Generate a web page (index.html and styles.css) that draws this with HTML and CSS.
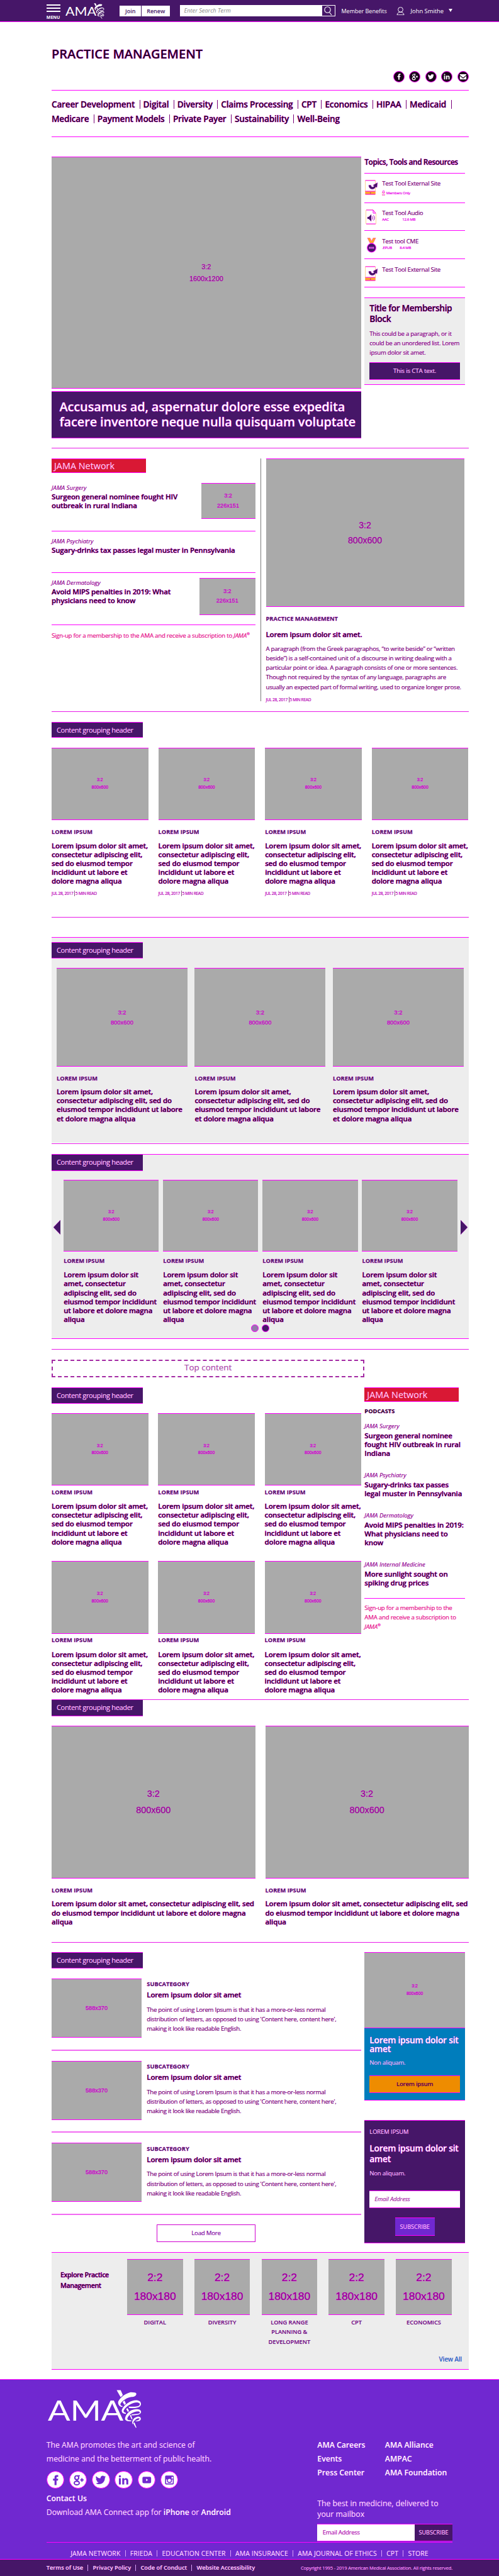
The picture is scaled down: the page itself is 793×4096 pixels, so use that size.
FILE: index.html
```html
<!DOCTYPE html>
<html lang="en">
<head>
<meta charset="utf-8">
<title>Practice Management</title>
<link rel="stylesheet" href="styles.css">
</head>
<body>
<svg width="0" height="0" class="defs">
  <defs>
    <symbol id="staff" viewBox="-2 -2 211 323">
      <g fill="#fff">
        <path d="M0 0H34L52 42 34 60z"/>
        <path d="M166 32Q166 22 150 20L118 18C80 26 30 60 14 95 8 115 18 138 48 142L50 134C34 132 28 125 34 112 50 88 90 62 125 58 145 58 166 48 166 32z"/>
        <path d="M205 120C208 80 150 75 100 105 60 130 35 165 45 185 50 198 65 200 78 200L78 192C60 188 54 180 62 168 80 130 150 95 180 105 195 110 200 118 190 130 175 142 130 140 100 140L105 150C150 155 200 152 205 120z"/>
        <path d="M206 185C206 155 150 155 115 175 80 200 65 235 73 250 80 262 105 265 125 262L123 255C100 256 88 250 90 238 100 205 150 175 185 180 198 185 200 190 190 196 170 202 145 202 130 204L120 211C160 215 204 208 206 185z"/>
        <path d="M204 240C200 215 170 220 150 235 130 252 128 275 133 290 140 265 160 240 185 238 195 238 195 244 188 248 175 256 165 256 152 262 180 264 204 262 204 240z"/>
        <path d="M50 100L66 88 78 115 66 125zM80 160L92 152 104 175 95 185zM110 212L120 208 134 245 126 245zM138 278L150 272 167 315 162 319z"/>
      </g>
    </symbol>
    <symbol id="fb" viewBox="0 0 20 20"><path d="M8.8 16.2v-5.500H7V8.400h1.800V6.800C8.800 4.900 9.900 4.200 11.500 4.200h1.700v2.200h-1.100c-.8 0-.9.4-.9 1v1h2l-.3 2.300h-1.700v5.500z"/></symbol>
    <symbol id="gp" viewBox="0 0 20 20"><g fill="none" stroke="currentColor" stroke-width="1.500"><circle cx="8.300" cy="7.300" r="2.300"/><ellipse cx="8.300" cy="13.700" rx="3" ry="2.200"/><path d="M8.500 9.600c-1.500 1 1 1.500 2 2.500M9 5h3M12.500 10h4M14.500 8v4"/></g></symbol>
    <symbol id="tw" viewBox="0 0 20 20"><path d="M16 6c-.5.3-1 .4-1.400.4.500-.3.900-.8 1-1.300-.5.300-1 .5-1.600.6a2.600 2.600 0 0 0-4.400 2.300C7.500 7.900 5.600 6.900 4.400 5.400c-.7 1.200-.3 2.700.8 3.400-.4 0-.8-.1-1.100-.3 0 1.200.8 2.300 2 2.500h-1.100c.3 1 1.300 1.700 2.400 1.800A5 5 0 0 1 4 13.900c4.900 3 11-.1 10.900-6.600.4-.3.800-.8 1.100-1.300z"/></symbol>
    <symbol id="li" viewBox="0 0 20 20"><path d="M4.500 8h2.300v7.500H4.500zM5.700 4.300a1.300 1.300 0 1 1 0 2.700 1.300 1.300 0 0 1 0-2.700zM8.500 8h2.300v1c1-1.700 4.900-1.800 4.900 1.700v4.800h-2.300v-4.200c0-2-2.500-1.800-2.500 0v4.200H8.500z"/></symbol>
    <symbol id="ml" viewBox="0 0 20 20"><path d="M3.500 5h13v1.500L10 12 3.500 6.500zM3.500 8.500L10 14l6.500-5.500V15.500h-13z"/></symbol>
    <symbol id="yt" viewBox="0 0 20 20"><path fill-rule="evenodd" d="M6.300 6.200h7.400a1.500 1.500 0 0 1 1.500 1.500v4.800a1.500 1.500 0 0 1-1.500 1.500H6.300a1.500 1.500 0 0 1-1.500-1.500V7.700a1.500 1.500 0 0 1 1.500-1.500zM9.200 8.500v3l2.400-1.500z"/></symbol>
    <symbol id="ig" viewBox="0 0 20 20"><rect x="4.800" y="4.800" width="10.400" height="10.600" rx="1.200"/><path d="M12.500 6.500h2v1.800h-2zM6 9.500h8v4.700H6z" fill="#fff"/><circle cx="10" cy="10.500" r="3"/><circle cx="10" cy="10.500" r="1.900" fill="#fff"/></symbol>
    <symbol id="ext" viewBox="0 0 22 24"><rect x="1.500" y="1" width="16" height="22" rx="1" fill="#fff" stroke="#ffa52b"/><rect x="1.500" y="18" width="16" height="5" fill="#ffa52b"/><path d="M1.500 1h16M1.500 18h16M1.500 23h16" stroke="#f0f"/><rect x="9" y="20" width="1.500" height="1.500" fill="#a02a80"/><path d="M7 8.500c0 7 8.500 8.500 11 2.500l2 1 .8-7.500-7 4 2 1c-1.500 3-5 2.500-5.300-1z" fill="#461668" stroke="#f0f" stroke-width=".6"/></symbol>
    <symbol id="aud" viewBox="0 0 22 24"><path d="M3 1h11l4 5v17H3z" fill="#fff" stroke="#ffa52b"/><path d="M3 1h11l4 5h-4V1M3 23h15" fill="none" stroke="#f0f"/><path d="M5 12h2l4-4v11l-4-4H5z" fill="#461668" stroke="#f0f" stroke-width=".4"/><path d="M12.500 11q2 2.500 0 5M14.500 9.500q3.500 4 0 8" fill="none" stroke="#a000b0"/></symbol>
    <symbol id="cme" viewBox="0 0 22 24"><path d="M5 .4h4l2.500 5 2.500-5h4l-4 8h-5z" fill="#ffa52b" stroke="#f0f" stroke-width=".7"/><circle cx="11.500" cy="16" r="6.400" fill="#461668" stroke="#f0f" stroke-width="2"/><path d="M7.500 16h8" stroke="#f6f" stroke-width="3" stroke-dasharray="1.500 .6"/></symbol>
  </defs>
</svg>

<header class="top">
  <div class="burger"><i></i><i></i><i></i><b>MENU</b></div>
  <div class="logo"><span class="word">AMA</span><svg class="logo-staff"><use href="#staff"/></svg></div>
  <div class="join"><a>Join</a><a>Renew</a></div>
  <div class="search"><em>Enter Search Term</em><svg class="mag" viewBox="0 0 20 16"><circle cx="8.500" cy="6.500" r="4.700"/><path d="M11.500 10.500l3.500 4.500"/></svg></div>
  <a class="benefits">Member Benefits</a>
  <svg class="user" viewBox="0 0 13 14"><circle cx="6.500" cy="4.500" r="4"/><path d="M.8 13.200c0-6 11.400-6 11.400 0z"/></svg>
  <a class="name">John Smithe</a><i class="caret"></i>
</header>

<main>
  <section class="title-bar">
    <h1>PRACTICE MANAGEMENT</h1>
    <div class="share">
      <svg><use href="#fb"/></svg><svg><use href="#gp"/></svg><svg><use href="#tw"/></svg><svg><use href="#li"/></svg><svg><use href="#ml"/></svg>
    </div>
  </section>

  <nav class="topics">
    <div><a>Career Development</a><a>Digital</a><a>Diversity</a><a>Claims Processing</a><a>CPT</a><a>Economics</a><a>HIPAA</a><a>Medicaid</a></div>
    <div><a>Medicare</a><a>Payment Models</a><a>Private Payer</a><a>Sustainability</a><a class="last">Well-Being</a></div>
  </nav>

  <section class="hero">
    <div>
      <div class="ph ph-hero">3:2<br>1600x1200</div>
      <h2 class="hero-cap">Accusamus ad, aspernatur dolore esse expedita<br>facere inventore neque nulla quisquam voluptate</h2>
    </div>
    <aside class="side">
      <h3 class="tools-head">Topics, Tools and Resources</h3>
      <div class="tool first"><svg><use href="#ext"/></svg><div>Test Tool External Site<p class="lock"><svg viewBox="0 0 10 16"><path d="M2.500 7V4a2.500 3 0 0 1 5 0v3" fill="none" stroke="#f0f" stroke-width="1.600"/><rect x="1" y="7" width="8" height="8" fill="#fff" stroke="#f0a030" stroke-width="1.600"/><path d="M5 9v4M0 7h10M0 15h10" stroke="#f0f" stroke-width="1.400"/></svg>Members Only</p></div></div>
      <div class="tool"><svg><use href="#aud"/></svg><div>Test Tool Audio<p><span class="c1">AAC</span>12.6 MB</p></div></div>
      <div class="tool"><svg><use href="#cme"/></svg><div>Test tool CME<p><span class="c2">.EPUB</span>8.4 MB</p></div></div>
      <div class="tool"><svg><use href="#ext"/></svg><div>Test Tool External Site</div></div>
      <div class="member">
        <h3>Title for Membership<br>Block</h3>
        <p>This could be a paragraph, or it<br>could be an unordered list. Lorem<br>ipsum dolor sit amet.</p>
        <a>This is CTA text.</a>
      </div>
    </aside>
  </section>

  <section class="network">
    <div class="net-left">
      <div class="jama">JAMA Network</div>
      <article class="n1"><div><em>JAMA Surgery</em><h4>Surgeon general nominee fought HIV<br>outbreak in rural Indiana</h4></div><div class="ph ph-a">3:2<br>226x151</div></article>
      <article class="n2"><div><em>JAMA Psychiatry</em><h4>Sugary-drinks tax passes legal muster in Pennsylvania</h4></div></article>
      <article class="n3"><div><em>JAMA Dermatology</em><h4>Avoid MIPS penalties in 2019: What<br>physicians need to know</h4></div><div class="ph ph-b">3:2<br>226x151</div></article>
      <p class="signup">Sign-up for a membership to the AMA and receive a subscription to <i>JAMA</i><sup>®</sup></p>
    </div>
    <div class="net-right">
      <div class="ph ph-net">3:2<br>800x600</div>
      <div class="kicker">PRACTICE MANAGEMENT</div>
      <h4>Lorem ipsum dolor sit amet.</h4>
      <p>A paragraph (from the Greek paragraphos, “to write beside” or “written<br>beside”) is a self-contained unit of a discourse in writing dealing with a<br>particular point or idea. A paragraph consists of one or more sentences.<br>Though not required by the syntax of any language, paragraphs are<br>usually an expected part of formal writing, used to organize longer prose.</p>
      <div class="meta">JUL 28, 2017 <s></s> 5 MIN READ</div>
    </div>
  </section>

  <section class="four">
    <h5 class="group">Content grouping header</h5>
    <div class="cards">
      <article><div class="ph">3:2<br>800x600</div><div class="kicker">LOREM IPSUM</div><h4>Lorem ipsum dolor sit amet,<br>consectetur adipiscing elit,<br>sed do eiusmod tempor<br>incididunt ut labore et<br>dolore magna aliqua</h4><div class="meta">JUL 28, 2017 <s></s> 5 MIN READ</div></article>
      <article><div class="ph">3:2<br>800x600</div><div class="kicker">LOREM IPSUM</div><h4>Lorem ipsum dolor sit amet,<br>consectetur adipiscing elit,<br>sed do eiusmod tempor<br>incididunt ut labore et<br>dolore magna aliqua</h4><div class="meta">JUL 28, 2017 <s></s> 5 MIN READ</div></article>
      <article><div class="ph">3:2<br>800x600</div><div class="kicker">LOREM IPSUM</div><h4>Lorem ipsum dolor sit amet,<br>consectetur adipiscing elit,<br>sed do eiusmod tempor<br>incididunt ut labore et<br>dolore magna aliqua</h4><div class="meta">JUL 28, 2017 <s></s> 5 MIN READ</div></article>
      <article><div class="ph">3:2<br>800x600</div><div class="kicker">LOREM IPSUM</div><h4>Lorem ipsum dolor sit amet,<br>consectetur adipiscing elit,<br>sed do eiusmod tempor<br>incididunt ut labore et<br>dolore magna aliqua</h4><div class="meta">JUL 28, 2017 <s></s> 5 MIN READ</div></article>
    </div>
  </section>

  <section class="three">
    <div class="panel">
      <h5 class="group">Content grouping header</h5>
      <div class="cards">
        <article><div class="ph">3:2<br>800x600</div><div class="kicker">LOREM IPSUM</div><h4>Lorem ipsum dolor sit amet,<br>consectetur adipiscing elit, sed do<br>eiusmod tempor incididunt ut labore<br>et dolore magna aliqua</h4></article>
        <article><div class="ph">3:2<br>800x600</div><div class="kicker">LOREM IPSUM</div><h4>Lorem ipsum dolor sit amet,<br>consectetur adipiscing elit, sed do<br>eiusmod tempor incididunt ut labore<br>et dolore magna aliqua</h4></article>
        <article><div class="ph">3:2<br>800x600</div><div class="kicker">LOREM IPSUM</div><h4>Lorem ipsum dolor sit amet,<br>consectetur adipiscing elit, sed do<br>eiusmod tempor incididunt ut labore<br>et dolore magna aliqua</h4></article>
      </div>
    </div>
  </section>

  <section class="slider">
    <div class="panel">
      <h5 class="group">Content grouping header</h5>
      <div class="cards">
        <article><div class="ph">3:2<br>800x600</div><div class="kicker">LOREM IPSUM</div><h4>Lorem ipsum dolor sit<br>amet, consectetur<br>adipiscing elit, sed do<br>eiusmod tempor incididunt<br>ut labore et dolore magna<br>aliqua</h4></article>
        <article><div class="ph">3:2<br>800x600</div><div class="kicker">LOREM IPSUM</div><h4>Lorem ipsum dolor sit<br>amet, consectetur<br>adipiscing elit, sed do<br>eiusmod tempor incididunt<br>ut labore et dolore magna<br>aliqua</h4></article>
        <article><div class="ph">3:2<br>800x600</div><div class="kicker">LOREM IPSUM</div><h4>Lorem ipsum dolor sit<br>amet, consectetur<br>adipiscing elit, sed do<br>eiusmod tempor incididunt<br>ut labore et dolore magna<br>aliqua</h4></article>
        <article><div class="ph">3:2<br>800x600</div><div class="kicker">LOREM IPSUM</div><h4>Lorem ipsum dolor sit<br>amet, consectetur<br>adipiscing elit, sed do<br>eiusmod tempor incididunt<br>ut labore et dolore magna<br>aliqua</h4></article>
      </div>
      <svg class="arrow prev" viewBox="0 0 11 23"><path d="M11 0v23L0 11.500z"/></svg>
      <svg class="arrow next" viewBox="0 0 11 23"><path d="M0 0v23l11-11.500z"/></svg>
      <div class="dots"><i></i><i class="on"></i></div>
    </div>
  </section>

  <section class="six">
    <div class="top-content">Top content</div>
    <div class="split">
      <div>
        <h5 class="group">Content grouping header</h5>
        <div class="cards">
          <article><div class="ph">3:2<br>800x600</div><div class="kicker">LOREM IPSUM</div><h4>Lorem ipsum dolor sit amet,<br>consectetur adipiscing elit,<br>sed do eiusmod tempor<br>incididunt ut labore et<br>dolore magna aliqua</h4></article>
          <article><div class="ph">3:2<br>800x600</div><div class="kicker">LOREM IPSUM</div><h4>Lorem ipsum dolor sit amet,<br>consectetur adipiscing elit,<br>sed do eiusmod tempor<br>incididunt ut labore et<br>dolore magna aliqua</h4></article>
          <article><div class="ph">3:2<br>800x600</div><div class="kicker">LOREM IPSUM</div><h4>Lorem ipsum dolor sit amet,<br>consectetur adipiscing elit,<br>sed do eiusmod tempor<br>incididunt ut labore et<br>dolore magna aliqua</h4></article>
          <article><div class="ph">3:2<br>800x600</div><div class="kicker">LOREM IPSUM</div><h4>Lorem ipsum dolor sit amet,<br>consectetur adipiscing elit,<br>sed do eiusmod tempor<br>incididunt ut labore et<br>dolore magna aliqua</h4></article>
          <article><div class="ph">3:2<br>800x600</div><div class="kicker">LOREM IPSUM</div><h4>Lorem ipsum dolor sit amet,<br>consectetur adipiscing elit,<br>sed do eiusmod tempor<br>incididunt ut labore et<br>dolore magna aliqua</h4></article>
          <article><div class="ph">3:2<br>800x600</div><div class="kicker">LOREM IPSUM</div><h4>Lorem ipsum dolor sit amet,<br>consectetur adipiscing elit,<br>sed do eiusmod tempor<br>incididunt ut labore et<br>dolore magna aliqua</h4></article>
        </div>
      </div>
      <aside class="pod">
        <div class="jama">JAMA Network</div>
        <div class="kicker">PODCASTS</div>
        <em>JAMA Surgery</em><h4>Surgeon general nominee<br>fought HIV outbreak in rural<br>Indiana</h4>
        <em>JAMA Psychiatry</em><h4>Sugary-drinks tax passes<br>legal muster in Pennsylvania</h4>
        <em>JAMA Dermatology</em><h4>Avoid MIPS penalties in 2019:<br>What physicians need to<br>know</h4>
        <em>JAMA Internal Medicine</em><h4>More sunlight sought on<br>spiking drug prices</h4>
        <p class="signup">Sign-up for a membership to the<br>AMA and receive a subscription to<br><i>JAMA</i><sup>®</sup></p>
      </aside>
    </div>
  </section>

  <section class="two">
    <h5 class="group">Content grouping header</h5>
    <div class="cards">
      <article><div class="ph">3:2<br>800x600</div><div class="kicker">LOREM IPSUM</div><h4>Lorem ipsum dolor sit amet, consectetur adipiscing elit, sed<br>do eiusmod tempor incididunt ut labore et dolore magna<br>aliqua</h4></article>
      <article><div class="ph">3:2<br>800x600</div><div class="kicker">LOREM IPSUM</div><h4>Lorem ipsum dolor sit amet, consectetur adipiscing elit, sed<br>do eiusmod tempor incididunt ut labore et dolore magna<br>aliqua</h4></article>
    </div>
  </section>

  <section class="feed">
    <div class="feed-list">
      <h5 class="group">Content grouping header</h5>
      <article><div class="ph">588x370</div><div><div class="kicker">SUBCATEGORY</div><h4>Lorem ipsum dolor sit amet</h4><p>The point of using Lorem Ipsum is that it has a more-or-less normal<br>distribution of letters, as opposed to using 'Content here, content here',<br>making it look like readable English.</p></div></article>
      <article><div class="ph">588x370</div><div><div class="kicker">SUBCATEGORY</div><h4>Lorem ipsum dolor sit amet</h4><p>The point of using Lorem Ipsum is that it has a more-or-less normal<br>distribution of letters, as opposed to using 'Content here, content here',<br>making it look like readable English.</p></div></article>
      <article><div class="ph">588x370</div><div><div class="kicker">SUBCATEGORY</div><h4>Lorem ipsum dolor sit amet</h4><p>The point of using Lorem Ipsum is that it has a more-or-less normal<br>distribution of letters, as opposed to using 'Content here, content here',<br>making it look like readable English.</p></div></article>
      <a class="more">Load More</a>
    </div>
    <aside class="side">
      <div class="ph ph-promo">3:2<br>800x600</div>
      <div class="promo"><h3>Lorem ipsum dolor sit<br>amet</h3><p>Non aliquam.</p><a>Lorem ipsum</a></div>
      <div class="subscribe"><div class="sk">LOREM IPSUM</div><h3>Lorem ipsum dolor sit<br>amet</h3><p>Non aliquam.</p><div class="field">Email Address</div><a>SUBSCRIBE</a></div>
    </aside>
  </section>

  <section class="explore">
    <h4>Explore Practice<br>Management</h4>
    <div class="tiles">
      <div><div class="ph">2:2<br>180x180</div><span>DIGITAL</span></div>
      <div><div class="ph">2:2<br>180x180</div><span>DIVERSITY</span></div>
      <div><div class="ph">2:2<br>180x180</div><span>LONG RANGE<br>PLANNING &amp;<br>DEVELOPMENT</span></div>
      <div><div class="ph">2:2<br>180x180</div><span>CPT</span></div>
      <div><div class="ph">2:2<br>180x180</div><span>ECONOMICS</span></div>
    </div>
    <a class="all">View All</a>
  </section>
</main>

<footer>
  <div class="foot-logo"><span class="foot-word">AMA</span><svg class="foot-staff"><use href="#staff"/></svg></div>
  <div class="foot-cols">
    <div class="foot-left">
      <p>The AMA promotes the art and science of<br>medicine and the betterment of public health.</p>
      <div class="social"><svg><use href="#fb"/></svg><svg><use href="#gp"/></svg><svg><use href="#tw"/></svg><svg><use href="#li"/></svg><svg><use href="#yt"/></svg><svg><use href="#ig"/></svg></div>
      <p><b>Contact Us</b><br>Download AMA Connect app for <b>iPhone</b> or <b>Android</b></p>
    </div>
    <div class="foot-right">
      <div class="links"><b>AMA Careers</b><b>AMA Alliance</b><b>Events</b><b>AMPAC</b><b>Press Center</b><b>AMA Foundation</b></div>
      <p>The best in medicine, delivered to<br>your mailbox</p>
      <div class="mail"><div>Email Address</div><a>SUBSCRIBE</a></div>
    </div>
  </div>
  <div class="sites"><a>JAMA NETWORK</a><a>FRIEDA</a><a>EDUCATION CENTER</a><a>AMA INSURANCE</a><a>AMA JOURNAL OF ETHICS</a><a>CPT</a><a>STORE</a></div>
</footer>
<div class="legal"><div class="terms"><a>Terms of Use</a><a>Privacy Policy</a><a>Code of Conduct</a><a>Website Accessibility</a></div><div class="copy">Copyright 1995 - 2019 American Medical Association. All rights reserved.</div></div>
</body>
</html>
```

FILE: styles.css
```css
* { box-sizing: border-box; margin: 0; padding: 0; }
body { width: 793px; background: #fff; font-family: "Open Sans", "Noto Sans", sans-serif; color: #260026; white-space: nowrap; -webkit-text-stroke: .2px #f0f; paint-order: stroke fill; }
a { color: inherit; text-decoration: none; }
svg { display: block; flex: none; fill: currentColor; -webkit-text-stroke: 0; }
.defs { position: absolute; }
h1, h2, h3, h4, .topics { font-weight: 600; -webkit-text-stroke: .6px #f0f; }

/* header */
.top { height: 34.600px; background: #461668; border-bottom: 1px solid #f0f; display: flex; align-items: flex-start; color: #fff; font-size: 9px; line-height: 18px; padding-left: 73.800px; -webkit-text-stroke: 0; }
.burger { width: 22.200px; padding-top: 6.800px; }
.burger i { display: block; height: 2.200px; background: #fff; margin-bottom: 2.900px; }
.burger b { display: block; font-size: 7px; line-height: 8px; margin-top: 4.500px; font-weight: 700; }
.logo { position: relative; margin-left: 8.500px; width: 62px; height: 33px; padding-top: 6.700px; }
.word, .foot-word { display: block; width: max-content; font-family: Lato, sans-serif; color: #fff; transform-origin: 0 50%; transform: scaleX(1.17); -webkit-text-stroke: 0; }
.word { font-size: 18.400px; line-height: 22px; }
.logo-staff { position: absolute; left: 44.500px; top: 4.700px; width: 17px; height: 25.500px; }
.join { display: flex; gap: 1px; margin: 8.500px 0 0 23.500px; color: #461668; font-weight: 600; text-align: center; }
.join a { background: #fff; height: 17.500px; line-height: 18px; width: 34.500px; }
.join a + a { width: 44.500px; }
.search { display: flex; justify-content: space-between; align-items: center; background: #fff; width: 246.500px; height: 18px; margin: 8px 0 0 16.500px; padding: 0 1px 0 6px; }
.search em { font-size: 9.200px; color: #888; }
.mag { width: 20px; height: 16px; background: #461668; fill: none; stroke: #fff; stroke-width: 1.100; }
.benefits { margin: 9px 0 0 9.500px; width: 88px; }
.user { width: 13px; height: 13.500px; margin-top: 10.500px; fill: none; stroke: #fff; }
.name { margin: 9px 0 0 9px; width: 61px; font-size: 9.400px; }
.caret { margin-top: 14.200px; border: 3px solid transparent; border-top: 5.500px solid #fff; border-bottom: 0; }

main { width: 662.600px; margin-left: 82px; }

/* title and topics */
.title-bar { height: 109.300px; border-bottom: 1px solid #f0f; padding-top: 37.500px; }
.title-bar h1 { font-size: 20px; line-height: 28px; }
.share { display: flex; justify-content: flex-end; gap: 7.600px; margin-top: 13px; color: #fff; }
.share svg { width: 17.900px; height: 17.900px; border-radius: 50%; background: #1a001a; border: .8px solid #f0f; }
.topics { height: 74.100px; border-bottom: 1px solid #f0f; padding-top: 11.500px; font-size: 13.600px; line-height: 22.100px; letter-spacing: -.2px; }
.topics div { display: flex; align-items: center; height: 22.100px; }
.topics a { border-right: 1px solid #7a007a; line-height: 14px; padding-right: 7.500px; margin-right: 5px; }
.topics .last { border: 0; }

/* image placeholders */
.ph { background: #aaa; border-top: 1px solid #f0f; border-bottom: 1px solid #f0f; display: grid; place-content: center; text-align: center; font-family: "Liberation Sans", Arial, sans-serif; color: #b800b8; -webkit-text-stroke: .3px #f0f; }

/* hero */
.hero { display: grid; grid-template-columns: 491.700px 159.700px; gap: 5.600px; height: 494.400px; padding-top: 31.200px; }
.ph-hero { height: 369.100px; font-size: 10.900px; line-height: 19px; color: #900090; }
.hero-cap { margin-top: 3.600px; height: 75px; background: #461668; border-top: 1px solid #f0f; border-bottom: 1px solid #f0f; color: #fff; font-size: 19.900px; line-height: 24.600px; padding: 12px 12.500px; font-weight: 600; letter-spacing: -.1px; }
.tools-head { font-size: 11.900px; line-height: 16px; height: 26.500px; border-bottom: 1px solid #f0f; letter-spacing: -.42px; }
.tool { display: flex; gap: 6px; height: 44.800px; border-bottom: 1px solid #f0f; padding-top: 10.500px; font-size: 9.700px; line-height: 11px; color: #600060; letter-spacing: -.3px; }
.tool.first { height: 47px; }
.tool > svg { width: 22px; height: 24px; }
.tool p { display: flex; align-items: center; font-size: 6px; line-height: 10px; color: #e000e0; letter-spacing: -.25px; }
.tool .lock { margin-top: 4.500px; gap: 1.500px; }
.lock svg { width: 5px; height: 9px; }
.c1 { width: 32px; } .c2 { width: 28px; }
.member { margin-top: 15.500px; height: 139.400px; background: #ededed; border-top: 1px solid #f0f; border-bottom: 1px solid #f0f; padding: 7px 8px; }
.member h3 { font-size: 13.700px; line-height: 17.100px; letter-spacing: -.38px; }
.member p { font-size: 9.600px; line-height: 15.200px; color: #700070; margin-top: 8px; letter-spacing: -.27px; }
.member a { display: block; height: 27.600px; line-height: 26px; margin-top: 8px; background: #461668; color: #ffd8ff; font-size: 9.800px; text-align: center; border-top: 1px solid #f0f; border-bottom: 1px solid #f0f; letter-spacing: -.18px; }

/* network */
.network { display: grid; grid-template-columns: 331.500px 331px; height: 418.400px; border-top: 1.500px solid #e81ae8; padding-top: 15.600px; }
.jama { width: 150.200px; height: 22.900px; background: #d91834; border-top: 1px solid #f0f; border-bottom: 1px solid #f0f; color: #ffd4f4; font-size: 14.400px; line-height: 21px; padding-left: 4px; }
.network article { display: flex; justify-content: space-between; width: 323.500px; border-bottom: 1px solid #f0f; }
em { display: block; font-size: 9.500px; line-height: 12px; color: #7a007a; }
h4 { font-size: 11.500px; line-height: 14.150px; letter-spacing: -.14px; }
.n1 { height: 93.500px; padding-top: 16px; } .n1 > div:first-child { padding-top: 2px; }
.n2 { height: 65.800px; padding-top: 9.800px; }
.n3 { height: 83.100px; padding-top: 7.900px; } .n3 > div:first-child { padding-top: 1.700px; }
.n1 em, .n2 em, .n3 em { margin-bottom: 1.300px; }
.ph-a, .ph-b { width: 86px; height: 57.300px; font-size: 9.100px; line-height: 15.800px; }
.ph-b { width: 88.500px; height: 58.800px; }
.signup { font-size: 9.700px; line-height: 15.300px; color: #e0106f; margin-top: 8.500px; letter-spacing: -.24px; }
sup { font-size: 6px; line-height: 0; }
.net-right { height: 386px; border-left: 1px solid #777; padding-left: 8px; }
.ph-net { width: 315px; height: 236.200px; font-size: 14.100px; line-height: 24px; color: #900090; }
.kicker { font-size: 9.300px; line-height: 12px; font-weight: 700; color: #4c1262; margin-top: 12.900px; -webkit-text-stroke: .3px #f0f; }
.net-right h4 { margin-top: 11.500px; }
.net-right p { font-size: 9.700px; line-height: 15.250px; color: #600060; margin-top: 7.800px; letter-spacing: -.27px; }
.meta { font-size: 6.600px; line-height: 9px; color: #a000a0; margin-top: 8px; letter-spacing: -.28px; }
.meta s { border-left: 1px solid #858; margin: 0 .5px; }

/* grouped cards */
.group { width: 145px; height: 25.600px; background: #461668; border-top: 1px solid #f0f; border-bottom: 1px solid #f0f; color: #ffd0ff; font-size: 11px; line-height: 23.500px; font-weight: 400; padding-left: 8px; letter-spacing: -.33px; }
.cards { display: grid; }
.cards h4 { margin-top: 8.500px; }
.four { height: 326.900px; border-top: 1.500px solid #e81ae8; padding-top: 15.900px; }
.four .cards { grid-template-columns: repeat(4, 153.700px); gap: 15.900px; margin-top: 15.600px; }
.four .ph { height: 115.300px; font-size: 6.900px; line-height: 12.100px; }
.panel { background: #ededed; border-top: 1px solid #f0f; position: relative; }
.three { height: 360.100px; border-top: 1.500px solid #e81ae8; padding-top: 31.600px; }
.three .panel { height: 327.200px; padding-top: 7px; }
.three .cards { grid-template-columns: repeat(3, 207.800px); gap: 11.700px; margin: 15.600px 0 0 8px; }
.three .ph { height: 156.300px; font-size: 9.400px; line-height: 15.900px; }
.slider { height: 326.800px; border-top: 1.500px solid #e81ae8; padding-top: 16.200px; }
.slider .panel { height: 294.400px; border-bottom: 1px solid #f0f; }
.slider .group { border-top: 0; }
.slider .cards { grid-template-columns: repeat(4, 151.200px); gap: 6.900px; margin: 14.600px 0 0 19.200px; }
.slider .ph { height: 114.100px; font-size: 6.900px; line-height: 11.800px; }
.slider .kicker { margin-top: 9.100px; }
.slider h4 { margin-top: 8.900px; }
.arrow { position: absolute; width: 11px; height: 23px; top: 104px; color: #461668; stroke: #f0f; stroke-width: .6; }
.prev { left: 2.500px; } .next { right: 2px; }
.dots { position: absolute; left: 317px; top: 270.200px; display: flex; gap: 5.300px; }
.dots i { width: 11.700px; height: 11.700px; border-radius: 50%; border: .8px solid #f0f; background: #9478ac; }
.dots .on { background: #461668; }

/* six cards and podcasts */
.six { height: 557.800px; border-top: 1.500px solid #e81ae8; padding-top: 16px; }
.top-content { width: 497.300px; height: 28.500px; border: 2px dashed #a32aa3; text-align: center; font-size: 13.400px; line-height: 21px; color: #a050a0; }
.split { display: grid; grid-template-columns: 497.300px 160px; margin-top: 15.900px; }
.six .cards { grid-template-columns: 153.500px 153.500px 153.500px; column-gap: 15.800px; row-gap: 23.300px; margin-top: 15.200px; }
.six .ph { height: 115.500px; font-size: 6.900px; line-height: 11.800px; }
.six .cards .kicker { margin-top: 4.700px; }
.six .cards h4 { margin-top: 9.200px; }
.pod .kicker { margin: 9.500px 0 11.500px; color: #1c001c; }
.pod em { margin-bottom: 1.700px; }
.pod h4 { margin-bottom: 22.100px; }
.pod .signup { border-top: 1px solid #f0f; margin-top: -5.800px; padding-top: 7px; }

/* two cards */
.two { height: 385.200px; border-top: 1.500px solid #e81ae8; }
.two .group { border-top: 0; }
.two .cards { grid-template-columns: 323.500px 323.100px; gap: 16px; margin-top: 15.400px; }
.two .ph { height: 242.700px; font-size: 14.400px; line-height: 25.300px; color: #900090; }

/* feed */
.feed { display: grid; grid-template-columns: 491.700px 159.700px; gap: 5.600px; height: 493.100px; border-top: 1.500px solid #e81ae8; padding-top: 15.800px; }
.feed-list article { display: flex; gap: 8.300px; height: 130.500px; padding-top: 15.800px; border-bottom: 2px solid #f26af2; }
.feed-list article:nth-of-type(1) { height: 131px; }
.feed-list .ph { width: 143px; height: 94.200px; font-size: 9.100px; }
.feed-list .kicker { margin-top: 3.500px; }
.feed-list h4 { margin-top: 3.900px; }
.feed-list p { font-size: 9.700px; line-height: 15.300px; color: #600060; margin-top: 8.500px; letter-spacing: -.29px; }
.more { display: block; width: 157px; height: 28px; margin: 15.500px 0 0 167px; border: 1px solid #d000d0; font-size: 9.800px; line-height: 26px; text-align: center; color: #6a1090; letter-spacing: -.3px; }
.ph-promo { height: 120.300px; font-size: 6.900px; line-height: 12px; }
.promo { height: 115.100px; background: #007dbc; border-bottom: 1px solid #f0f; color: #fff; padding: 12px 8px 0; }
.promo h3, .subscribe h3 { font-weight: 600; font-size: 13.800px; line-height: 14.300px; letter-spacing: -.23px; color: #fff; }
.promo p, .subscribe p { font-size: 9.600px; line-height: 14px; color: #f0c8f8; margin-top: 8px; letter-spacing: -.25px; }
.promo a { display: block; height: 27.900px; margin-top: 13px; background: #ee8c00; border-top: 1px solid #f0f; border-bottom: 1px solid #f0f; text-align: center; line-height: 26px; font-size: 9.700px; font-weight: 600; letter-spacing: -.3px; color: #500038; }
.subscribe { margin-top: 31.500px; height: 195.400px; background: #461668; border-top: 1px solid #f0f; border-bottom: 1px solid #f0f; padding: 10.500px 8px 0; color: #fff; }
.sk { font-size: 9.300px; line-height: 14px; color: #ffd0ff; }
.subscribe h3 { line-height: 17.200px; margin-top: 10px; }
.subscribe p { margin-top: 8px; }
.field { height: 28px; margin-top: 20px; background: #fff; border-top: 1px solid #f0f; border-bottom: 1px solid #f0f; color: #903090; font-size: 9.500px; font-style: italic; line-height: 26px; padding-left: 8px; letter-spacing: -.2px; }
.subscribe a { display: block; width: 62.600px; height: 28.500px; margin: 15.300px 0 0 40.700px; background: #7028d0; border-top: 1px solid #f0f; border-bottom: 1px solid #f0f; text-align: center; font-size: 9.100px; line-height: 28px; color: #ffd0ff; }

/* explore */
.explore { height: 187.300px; background: #ededed; border-top: 1px solid #f0f; border-bottom: 1px solid #f0f; display: grid; grid-template-columns: 106px 541px; grid-template-rows: 164px auto; padding: 10.300px 0 0 14px; }
.explore h4 { font-size: 10.700px; line-height: 17.500px; padding-top: 17px; letter-spacing: -.38px; }
.tiles { display: grid; grid-template-columns: repeat(5, 88.500px); column-gap: 18.300px; text-align: center; }
.tiles .ph { height: 88.800px; font-size: 17.400px; line-height: 30px; color: #900090; -webkit-text-stroke: .5px #f0f; }
.tiles span { display: block; font-size: 9.200px; line-height: 15.300px; font-weight: 600; color: #641078; padding-top: 4.200px; }
.all { grid-column: 2; justify-self: end; margin-right: 9px; margin-top: -12px; font-size: 10.100px; line-height: 14px; font-weight: 600; color: #2070c0; letter-spacing: -.2px; }

/* footer */
footer { height: 285.600px; margin-top: 15.400px; background: #7028d0; border-top: 1px solid #f0f; padding-left: 73.800px; color: #fce4ff; font-size: 12.250px; }
.foot-logo { position: relative; height: 90px; padding: 20.700px 0 0 2px; }
.foot-word { font-size: 45px; line-height: 54px; }
.foot-staff { position: absolute; left: 111.200px; top: 15.600px; width: 39.800px; height: 61px; }
.foot-cols { display: grid; grid-template-columns: 430.500px 215px; height: 167.500px; }
.foot-left p { line-height: 22px; padding-top: 2.900px; }
.foot-left p + .social { margin-top: 7.500px; }
.social { display: flex; gap: 7.700px; color: #7028d0; }
.social svg { width: 28.500px; height: 28.500px; background: #fff; border: .8px solid #f0f; border-radius: 50%; }
.social + p { margin-top: 1.500px; }
footer b { font-weight: 600; color: #fff; }
.links { display: grid; grid-template-columns: 107.500px 107.500px; line-height: 22.100px; padding-top: 2.900px; }
.foot-right p { line-height: 16.600px; margin-top: 29.800px; }
.mail { display: flex; height: 28.500px; margin-top: 6.300px; border-top: 1px solid #f0f; border-bottom: 1px solid #f0f; line-height: 26px; }
.mail div { width: 154.500px; background: #fff; font-size: 9.500px; padding-left: 8.500px; color: #a020a0; letter-spacing: -.27px; }
.mail a { width: 60.500px; background: #461668; font-size: 9.100px; text-align: center; color: #ffd0ff; }
.sites { width: 645.300px; border-top: 1px solid #f0f; display: flex; justify-content: center; padding-top: 12px; font-size: 10.400px; letter-spacing: .12px; }
.sites a, .terms a { line-height: 10px; padding-right: 7.200px; margin-right: 7.200px; border-right: 1px solid #d9a0f8; }
.sites a:last-child, .terms a:last-child { border: 0; margin: 0; padding: 0; }
.legal { height: 27px; background: #461668; border-top: 1px solid #f0f; padding: 0 74px 0 73.800px; display: flex; justify-content: space-between; align-items: center; color: #ffd8ff; }
.terms { display: flex; font-size: 9.250px; font-weight: 600; }
.copy { font-size: 7.500px; color: #f0b0f8; letter-spacing: -.14px; }
```
